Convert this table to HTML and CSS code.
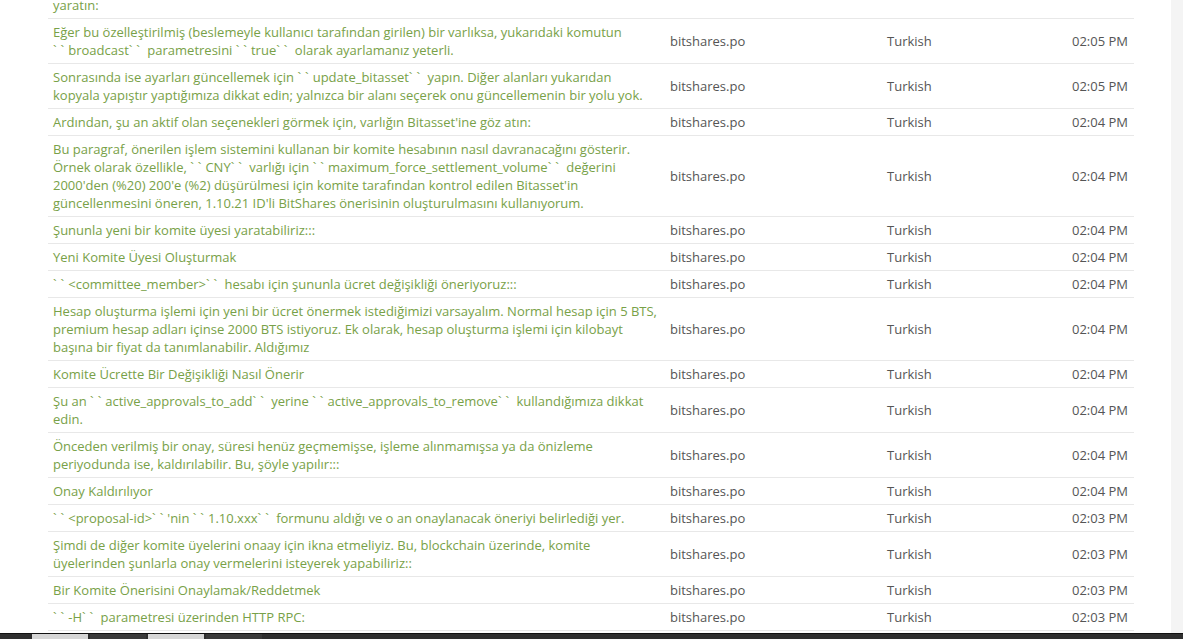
FILE: index.html
```html
<!DOCTYPE html>
<html lang="tr">
<head>
    <meta charset="UTF-8">
    <meta name="viewport" content="width=device-width, initial-scale=1.0">
    <title>Çeviri geçmişi</title>
    <link rel="stylesheet" href="styles.css">
</head>
<body>
    <div class="page">
        <table class="history">
            <colgroup>
                <col class="c-text">
                <col class="c-file">
                <col class="c-lang">
                <col class="c-time">
            </colgroup>
            <tbody>
                <tr><td class="msg">yaratın:</td><td class="file"></td><td class="lang"></td><td class="time"></td></tr>
                <tr><td class="msg">Eğer bu özelleştirilmiş (beslemeyle kullanıcı tarafından girilen) bir varlıksa, yukarıdaki komutun <span class="tick">``</span>broadcast<span class="tick">``</span> parametresini <span class="tick">``</span>true<span class="tick">``</span> olarak ayarlamanız yeterli.</td><td class="file">bitshares.po</td><td class="lang">Turkish</td><td class="time">02:05 PM</td></tr>
                <tr><td class="msg">Sonrasında ise ayarları güncellemek için <span class="tick">``</span>update_bitasset<span class="tick">``</span> yapın. Diğer alanları yukarıdan kopyala yapıştır yaptığımıza dikkat edin; yalnızca bir alanı seçerek onu güncellemenin bir yolu yok.</td><td class="file">bitshares.po</td><td class="lang">Turkish</td><td class="time">02:05 PM</td></tr>
                <tr><td class="msg">Ardından, şu an aktif olan seçenekleri görmek için, varlığın Bitasset'ine göz atın:</td><td class="file">bitshares.po</td><td class="lang">Turkish</td><td class="time">02:04 PM</td></tr>
                <tr><td class="msg">Bu paragraf, önerilen işlem sistemini kullanan bir komite hesabının nasıl davranacağını gösterir. Örnek olarak özellikle, <span class="tick">``</span>CNY<span class="tick">``</span> varlığı için <span class="tick">``</span>maximum_force_settlement_volume<span class="tick">``</span> değerini 2000'den (%20) 200'e (%2) düşürülmesi için komite tarafından kontrol edilen Bitasset'in güncellenmesini öneren, 1.10.21 ID'li BitShares önerisinin oluşturulmasını kullanıyorum.</td><td class="file">bitshares.po</td><td class="lang">Turkish</td><td class="time">02:04 PM</td></tr>
                <tr><td class="msg">Şununla yeni bir komite üyesi yaratabiliriz:::</td><td class="file">bitshares.po</td><td class="lang">Turkish</td><td class="time">02:04 PM</td></tr>
                <tr><td class="msg">Yeni Komite Üyesi Oluşturmak</td><td class="file">bitshares.po</td><td class="lang">Turkish</td><td class="time">02:04 PM</td></tr>
                <tr><td class="msg"><span class="tick">``</span>&lt;committee_member&gt;<span class="tick">``</span> hesabı için şununla ücret değişikliği öneriyoruz:::</td><td class="file">bitshares.po</td><td class="lang">Turkish</td><td class="time">02:04 PM</td></tr>
                <tr><td class="msg">Hesap oluşturma işlemi için yeni bir ücret önermek istediğimizi varsayalım. Normal hesap için 5 BTS, premium hesap adları içinse 2000 BTS istiyoruz. Ek olarak, hesap oluşturma işlemi için kilobayt başına bir fiyat da tanımlanabilir. Aldığımız</td><td class="file">bitshares.po</td><td class="lang">Turkish</td><td class="time">02:04 PM</td></tr>
                <tr><td class="msg">Komite Ücrette Bir Değişikliği Nasıl Önerir</td><td class="file">bitshares.po</td><td class="lang">Turkish</td><td class="time">02:04 PM</td></tr>
                <tr><td class="msg">Şu an <span class="tick">``</span>active_approvals_to_add<span class="tick">``</span> yerine <span class="tick">``</span>active_approvals_to_remove<span class="tick">``</span> kullandığımıza dikkat edin.</td><td class="file">bitshares.po</td><td class="lang">Turkish</td><td class="time">02:04 PM</td></tr>
                <tr><td class="msg">Önceden verilmiş bir onay, süresi henüz geçmemişse, işleme alınmamışsa ya da önizleme periyodunda ise, kaldırılabilir. Bu, şöyle yapılır:::</td><td class="file">bitshares.po</td><td class="lang">Turkish</td><td class="time">02:04 PM</td></tr>
                <tr><td class="msg">Onay Kaldırılıyor</td><td class="file">bitshares.po</td><td class="lang">Turkish</td><td class="time">02:04 PM</td></tr>
                <tr><td class="msg"><span class="tick">``</span>&lt;proposal-id&gt;<span class="tick">``</span>'nin <span class="tick">``</span>1.10.xxx<span class="tick">``</span> formunu aldığı ve o an onaylanacak öneriyi belirlediği yer.</td><td class="file">bitshares.po</td><td class="lang">Turkish</td><td class="time">02:03 PM</td></tr>
                <tr><td class="msg">Şimdi de diğer komite üyelerini onaay için ikna etmeliyiz. Bu, blockchain üzerinde, komite üyelerinden şunlarla onay vermelerini isteyerek yapabiliriz::</td><td class="file">bitshares.po</td><td class="lang">Turkish</td><td class="time">02:03 PM</td></tr>
                <tr><td class="msg">Bir Komite Önerisini Onaylamak/Reddetmek</td><td class="file">bitshares.po</td><td class="lang">Turkish</td><td class="time">02:03 PM</td></tr>
                <tr><td class="msg"><span class="tick">``</span>-H<span class="tick">``</span> parametresi üzerinden HTTP RPC:</td><td class="file">bitshares.po</td><td class="lang">Turkish</td><td class="time">02:03 PM</td></tr>
            </tbody>
        </table>
    </div>

    <div class="taskbar">
        <span class="tab light"></span>
        <span class="tab"></span>
        <span class="tab light"></span>
        <span class="tab"></span>
    </div>
</body>
</html>
```

FILE: styles.css
```css
html, body {
    margin: 0;
    padding: 0;
}
body {
    font-family: "Open Sans", Arial, sans-serif;
    font-size: 13px;
    background-color: #f4f4f4;
    overflow: hidden;
}
.page {
    width: 1171px;
    height: 639px;
    background-color: #fff;
    padding-left: 48px;
    box-sizing: border-box;
    overflow: hidden;
}
.history {
    width: 1086px;
    border-collapse: collapse;
    table-layout: fixed;
    margin-top: -8px;
}
.c-text { width: 617px; }
.c-file { width: 217px; }
.c-lang { width: 150px; }
.c-time { width: 102px; }
.history td {
    padding: 4px 5px;
    line-height: 18px;
    border-bottom: 1px solid #e8e8e8;
    vertical-align: middle;
    color: #555;
}
.history td.msg {
    color: #78a148;
    padding-right: 8px;
}
.tick {
    letter-spacing: 4px;
}
.history td.time {
    text-align: right;
    padding-right: 6px;
}
.taskbar {
    position: fixed;
    left: 0;
    right: 0;
    bottom: 0;
    height: 5px;
    background-color: #2f2f2f;
    border-top: 1px solid #111;
    display: flex;
    padding-left: 32px;
    gap: 2px;
}
.tab {
    width: 56px;
    height: 5px;
    background-color: #3a3a3a;
}
.tab.light {
    background-color: #d6d6d6;
}
```
